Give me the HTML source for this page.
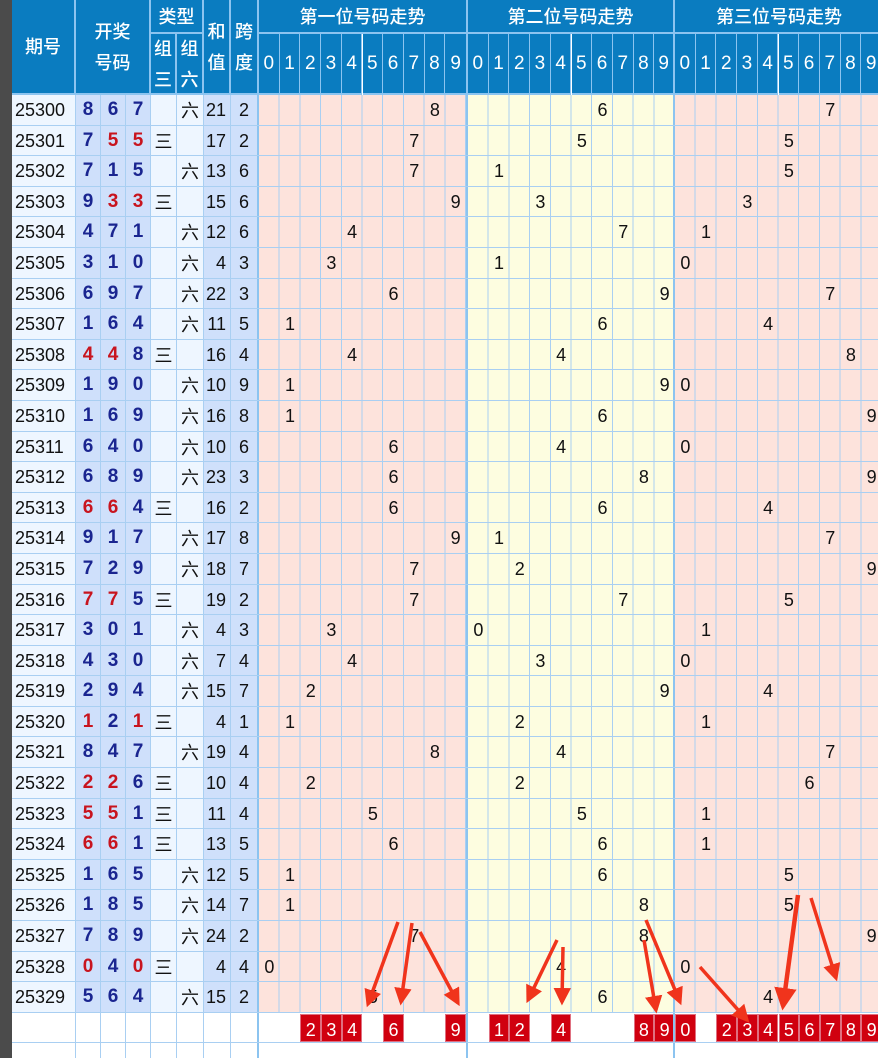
<!DOCTYPE html>
<html><head><meta charset="utf-8"><style>
*{margin:0;padding:0;box-sizing:border-box}
html,body{width:878px;height:1058px;overflow:hidden}
body{background:#fff;font-family:"Liberation Sans","Noto Sans CJK SC",sans-serif;position:relative}
#lm{position:absolute;left:0;top:0;width:12px;height:1058px;background:#4b4b4b}
.hd{position:absolute;background:#0a7cc0;color:#fff;border-right:2px solid #8cc4f0;border-bottom:2px solid #8cc4f0;display:flex;align-items:center;justify-content:center;text-align:center;font-family:"Noto Sans CJK SC",sans-serif;font-size:18px;line-height:31px;font-weight:500}
.dg{font-family:"Liberation Sans",sans-serif;font-size:19px;border-right:1px solid #8cc4f0;font-weight:normal}
.dg.e{border-right:2px solid #8cc4f0}
#rows{position:absolute;left:12px;top:95px;width:866px}
.r{position:relative;height:30.6px;display:flex;border-bottom:1px solid #a9cff2;font-size:18px;line-height:30px}
.r s{text-decoration:none;display:block;height:100%;border-right:1px solid #a9cff2;flex:none}
.r s.q{width:64px;background:#eef6ff;padding-left:3px;color:#111}
.r s.n{width:25px;background:#cfe0fb;text-align:center;font-weight:bold;color:#1a2590;font-size:19px}
.r s.n.x{color:#c8141e}
.r s.g{width:26px;background:#eef6ff;text-align:center;font-family:"Noto Sans CJK SC",sans-serif;color:#111}
.r s.g2{width:27px}
.r s.h{width:27px;background:#cfe0fb;text-align:right;padding-right:4px;color:#111}
.r s.k{width:28px;background:#cfe0fb;text-align:center;color:#111;border-right:2px solid #8cc4f0}
.z{position:absolute;top:0;height:100%;width:207px;background-image:repeating-linear-gradient(to right,transparent 0 19.7px,#a9cff2 19.7px 20.7px)}
.z1{left:247px;background-color:#fde3dc}
.z2{left:454px;background-color:#fdfde0;border-left:2px solid #8cc4f0}
.z3{left:661px;background-color:#fde3dc;border-left:2px solid #8cc4f0}
.z i{font-style:normal;position:absolute;top:0;width:20.7px;text-align:center;color:#111}
.p0{left:0}.p1{left:20.7px}.p2{left:41.4px}.p3{left:62.1px}.p4{left:82.8px}.p5{left:103.5px}.p6{left:124.2px}.p7{left:144.9px}.p8{left:165.6px}.p9{left:186.3px}
.w s,.w .z{background:#fff!important}
.w .z i{background:#d0000f;color:#fff;height:28px;top:1px;border:1px solid #e07080}
svg{position:absolute;left:0;top:0}
</style></head><body>
<div id="lm"></div>
<div class="hd" style="left:12px;top:0;width:64px;height:95px">期号</div>
<div class="hd" style="left:76px;top:0;width:75px;height:95px">开奖<br>号码</div>
<div class="hd" style="left:151px;top:0;width:53px;height:34px">类型</div>
<div class="hd" style="left:151px;top:34px;width:26px;height:61px">组<br>三</div>
<div class="hd" style="left:177px;top:34px;width:27px;height:61px">组<br>六</div>
<div class="hd" style="left:204px;top:0;width:27px;height:95px">和<br>值</div>
<div class="hd" style="left:231px;top:0;width:28px;height:95px">跨<br>度</div>
<div class="hd" style="left:259px;top:0;width:209px;height:34px">第一位号码走势</div>
<div class="hd" style="left:468px;top:0;width:207px;height:34px">第二位号码走势</div>
<div class="hd" style="left:675px;top:0;width:210px;height:34px">第三位号码走势</div>
<div class="hd dg" style="left:259px;top:34px;width:20.7px;height:61px">0</div><div class="hd dg" style="left:279.7px;top:34px;width:20.7px;height:61px">1</div><div class="hd dg" style="left:300.4px;top:34px;width:20.7px;height:61px">2</div><div class="hd dg" style="left:321.1px;top:34px;width:20.7px;height:61px">3</div><div class="hd dg" style="left:341.8px;top:34px;width:20.7px;height:61px">4</div><div class="hd dg" style="left:362.5px;top:34px;width:20.7px;height:61px">5</div><div class="hd dg" style="left:383.2px;top:34px;width:20.7px;height:61px">6</div><div class="hd dg" style="left:403.9px;top:34px;width:20.7px;height:61px">7</div><div class="hd dg" style="left:424.6px;top:34px;width:20.7px;height:61px">8</div><div class="hd dg e" style="left:445.3px;top:34px;width:22.7px;height:61px">9</div>
<div class="hd dg" style="left:468px;top:34px;width:20.7px;height:61px">0</div><div class="hd dg" style="left:488.7px;top:34px;width:20.7px;height:61px">1</div><div class="hd dg" style="left:509.4px;top:34px;width:20.7px;height:61px">2</div><div class="hd dg" style="left:530.1px;top:34px;width:20.7px;height:61px">3</div><div class="hd dg" style="left:550.8px;top:34px;width:20.7px;height:61px">4</div><div class="hd dg" style="left:571.5px;top:34px;width:20.7px;height:61px">5</div><div class="hd dg" style="left:592.2px;top:34px;width:20.7px;height:61px">6</div><div class="hd dg" style="left:612.9px;top:34px;width:20.7px;height:61px">7</div><div class="hd dg" style="left:633.6px;top:34px;width:20.7px;height:61px">8</div><div class="hd dg e" style="left:654.3px;top:34px;width:20.7px;height:61px">9</div>
<div class="hd dg" style="left:675px;top:34px;width:20.7px;height:61px">0</div><div class="hd dg" style="left:695.7px;top:34px;width:20.7px;height:61px">1</div><div class="hd dg" style="left:716.4px;top:34px;width:20.7px;height:61px">2</div><div class="hd dg" style="left:737.1px;top:34px;width:20.7px;height:61px">3</div><div class="hd dg" style="left:757.8px;top:34px;width:20.7px;height:61px">4</div><div class="hd dg" style="left:778.5px;top:34px;width:20.7px;height:61px">5</div><div class="hd dg" style="left:799.2px;top:34px;width:20.7px;height:61px">6</div><div class="hd dg" style="left:819.9px;top:34px;width:20.7px;height:61px">7</div><div class="hd dg" style="left:840.6px;top:34px;width:20.7px;height:61px">8</div><div class="hd dg" style="left:861.3px;top:34px;width:20.7px;height:61px">9</div>

<div id="rows">
<div class="r"><s class="q">25300</s><s class="n">8</s><s class="n">6</s><s class="n">7</s><s class="g"></s><s class="g g2">六</s><s class="h">21</s><s class="k">2</s><div class="z z1"><i class="p8">8</i></div><div class="z z2"><i class="p6">6</i></div><div class="z z3"><i class="p7">7</i></div></div>
<div class="r"><s class="q">25301</s><s class="n">7</s><s class="n x">5</s><s class="n x">5</s><s class="g">三</s><s class="g g2"></s><s class="h">17</s><s class="k">2</s><div class="z z1"><i class="p7">7</i></div><div class="z z2"><i class="p5">5</i></div><div class="z z3"><i class="p5">5</i></div></div>
<div class="r"><s class="q">25302</s><s class="n">7</s><s class="n">1</s><s class="n">5</s><s class="g"></s><s class="g g2">六</s><s class="h">13</s><s class="k">6</s><div class="z z1"><i class="p7">7</i></div><div class="z z2"><i class="p1">1</i></div><div class="z z3"><i class="p5">5</i></div></div>
<div class="r"><s class="q">25303</s><s class="n">9</s><s class="n x">3</s><s class="n x">3</s><s class="g">三</s><s class="g g2"></s><s class="h">15</s><s class="k">6</s><div class="z z1"><i class="p9">9</i></div><div class="z z2"><i class="p3">3</i></div><div class="z z3"><i class="p3">3</i></div></div>
<div class="r"><s class="q">25304</s><s class="n">4</s><s class="n">7</s><s class="n">1</s><s class="g"></s><s class="g g2">六</s><s class="h">12</s><s class="k">6</s><div class="z z1"><i class="p4">4</i></div><div class="z z2"><i class="p7">7</i></div><div class="z z3"><i class="p1">1</i></div></div>
<div class="r"><s class="q">25305</s><s class="n">3</s><s class="n">1</s><s class="n">0</s><s class="g"></s><s class="g g2">六</s><s class="h">4</s><s class="k">3</s><div class="z z1"><i class="p3">3</i></div><div class="z z2"><i class="p1">1</i></div><div class="z z3"><i class="p0">0</i></div></div>
<div class="r"><s class="q">25306</s><s class="n">6</s><s class="n">9</s><s class="n">7</s><s class="g"></s><s class="g g2">六</s><s class="h">22</s><s class="k">3</s><div class="z z1"><i class="p6">6</i></div><div class="z z2"><i class="p9">9</i></div><div class="z z3"><i class="p7">7</i></div></div>
<div class="r"><s class="q">25307</s><s class="n">1</s><s class="n">6</s><s class="n">4</s><s class="g"></s><s class="g g2">六</s><s class="h">11</s><s class="k">5</s><div class="z z1"><i class="p1">1</i></div><div class="z z2"><i class="p6">6</i></div><div class="z z3"><i class="p4">4</i></div></div>
<div class="r"><s class="q">25308</s><s class="n x">4</s><s class="n x">4</s><s class="n">8</s><s class="g">三</s><s class="g g2"></s><s class="h">16</s><s class="k">4</s><div class="z z1"><i class="p4">4</i></div><div class="z z2"><i class="p4">4</i></div><div class="z z3"><i class="p8">8</i></div></div>
<div class="r"><s class="q">25309</s><s class="n">1</s><s class="n">9</s><s class="n">0</s><s class="g"></s><s class="g g2">六</s><s class="h">10</s><s class="k">9</s><div class="z z1"><i class="p1">1</i></div><div class="z z2"><i class="p9">9</i></div><div class="z z3"><i class="p0">0</i></div></div>
<div class="r"><s class="q">25310</s><s class="n">1</s><s class="n">6</s><s class="n">9</s><s class="g"></s><s class="g g2">六</s><s class="h">16</s><s class="k">8</s><div class="z z1"><i class="p1">1</i></div><div class="z z2"><i class="p6">6</i></div><div class="z z3"><i class="p9">9</i></div></div>
<div class="r"><s class="q">25311</s><s class="n">6</s><s class="n">4</s><s class="n">0</s><s class="g"></s><s class="g g2">六</s><s class="h">10</s><s class="k">6</s><div class="z z1"><i class="p6">6</i></div><div class="z z2"><i class="p4">4</i></div><div class="z z3"><i class="p0">0</i></div></div>
<div class="r"><s class="q">25312</s><s class="n">6</s><s class="n">8</s><s class="n">9</s><s class="g"></s><s class="g g2">六</s><s class="h">23</s><s class="k">3</s><div class="z z1"><i class="p6">6</i></div><div class="z z2"><i class="p8">8</i></div><div class="z z3"><i class="p9">9</i></div></div>
<div class="r"><s class="q">25313</s><s class="n x">6</s><s class="n x">6</s><s class="n">4</s><s class="g">三</s><s class="g g2"></s><s class="h">16</s><s class="k">2</s><div class="z z1"><i class="p6">6</i></div><div class="z z2"><i class="p6">6</i></div><div class="z z3"><i class="p4">4</i></div></div>
<div class="r"><s class="q">25314</s><s class="n">9</s><s class="n">1</s><s class="n">7</s><s class="g"></s><s class="g g2">六</s><s class="h">17</s><s class="k">8</s><div class="z z1"><i class="p9">9</i></div><div class="z z2"><i class="p1">1</i></div><div class="z z3"><i class="p7">7</i></div></div>
<div class="r"><s class="q">25315</s><s class="n">7</s><s class="n">2</s><s class="n">9</s><s class="g"></s><s class="g g2">六</s><s class="h">18</s><s class="k">7</s><div class="z z1"><i class="p7">7</i></div><div class="z z2"><i class="p2">2</i></div><div class="z z3"><i class="p9">9</i></div></div>
<div class="r"><s class="q">25316</s><s class="n x">7</s><s class="n x">7</s><s class="n">5</s><s class="g">三</s><s class="g g2"></s><s class="h">19</s><s class="k">2</s><div class="z z1"><i class="p7">7</i></div><div class="z z2"><i class="p7">7</i></div><div class="z z3"><i class="p5">5</i></div></div>
<div class="r"><s class="q">25317</s><s class="n">3</s><s class="n">0</s><s class="n">1</s><s class="g"></s><s class="g g2">六</s><s class="h">4</s><s class="k">3</s><div class="z z1"><i class="p3">3</i></div><div class="z z2"><i class="p0">0</i></div><div class="z z3"><i class="p1">1</i></div></div>
<div class="r"><s class="q">25318</s><s class="n">4</s><s class="n">3</s><s class="n">0</s><s class="g"></s><s class="g g2">六</s><s class="h">7</s><s class="k">4</s><div class="z z1"><i class="p4">4</i></div><div class="z z2"><i class="p3">3</i></div><div class="z z3"><i class="p0">0</i></div></div>
<div class="r"><s class="q">25319</s><s class="n">2</s><s class="n">9</s><s class="n">4</s><s class="g"></s><s class="g g2">六</s><s class="h">15</s><s class="k">7</s><div class="z z1"><i class="p2">2</i></div><div class="z z2"><i class="p9">9</i></div><div class="z z3"><i class="p4">4</i></div></div>
<div class="r"><s class="q">25320</s><s class="n x">1</s><s class="n">2</s><s class="n x">1</s><s class="g">三</s><s class="g g2"></s><s class="h">4</s><s class="k">1</s><div class="z z1"><i class="p1">1</i></div><div class="z z2"><i class="p2">2</i></div><div class="z z3"><i class="p1">1</i></div></div>
<div class="r"><s class="q">25321</s><s class="n">8</s><s class="n">4</s><s class="n">7</s><s class="g"></s><s class="g g2">六</s><s class="h">19</s><s class="k">4</s><div class="z z1"><i class="p8">8</i></div><div class="z z2"><i class="p4">4</i></div><div class="z z3"><i class="p7">7</i></div></div>
<div class="r"><s class="q">25322</s><s class="n x">2</s><s class="n x">2</s><s class="n">6</s><s class="g">三</s><s class="g g2"></s><s class="h">10</s><s class="k">4</s><div class="z z1"><i class="p2">2</i></div><div class="z z2"><i class="p2">2</i></div><div class="z z3"><i class="p6">6</i></div></div>
<div class="r"><s class="q">25323</s><s class="n x">5</s><s class="n x">5</s><s class="n">1</s><s class="g">三</s><s class="g g2"></s><s class="h">11</s><s class="k">4</s><div class="z z1"><i class="p5">5</i></div><div class="z z2"><i class="p5">5</i></div><div class="z z3"><i class="p1">1</i></div></div>
<div class="r"><s class="q">25324</s><s class="n x">6</s><s class="n x">6</s><s class="n">1</s><s class="g">三</s><s class="g g2"></s><s class="h">13</s><s class="k">5</s><div class="z z1"><i class="p6">6</i></div><div class="z z2"><i class="p6">6</i></div><div class="z z3"><i class="p1">1</i></div></div>
<div class="r"><s class="q">25325</s><s class="n">1</s><s class="n">6</s><s class="n">5</s><s class="g"></s><s class="g g2">六</s><s class="h">12</s><s class="k">5</s><div class="z z1"><i class="p1">1</i></div><div class="z z2"><i class="p6">6</i></div><div class="z z3"><i class="p5">5</i></div></div>
<div class="r"><s class="q">25326</s><s class="n">1</s><s class="n">8</s><s class="n">5</s><s class="g"></s><s class="g g2">六</s><s class="h">14</s><s class="k">7</s><div class="z z1"><i class="p1">1</i></div><div class="z z2"><i class="p8">8</i></div><div class="z z3"><i class="p5">5</i></div></div>
<div class="r"><s class="q">25327</s><s class="n">7</s><s class="n">8</s><s class="n">9</s><s class="g"></s><s class="g g2">六</s><s class="h">24</s><s class="k">2</s><div class="z z1"><i class="p7">7</i></div><div class="z z2"><i class="p8">8</i></div><div class="z z3"><i class="p9">9</i></div></div>
<div class="r"><s class="q">25328</s><s class="n x">0</s><s class="n">4</s><s class="n x">0</s><s class="g">三</s><s class="g g2"></s><s class="h">4</s><s class="k">4</s><div class="z z1"><i class="p0">0</i></div><div class="z z2"><i class="p4">4</i></div><div class="z z3"><i class="p0">0</i></div></div>
<div class="r"><s class="q">25329</s><s class="n">5</s><s class="n">6</s><s class="n">4</s><s class="g"></s><s class="g g2">六</s><s class="h">15</s><s class="k">2</s><div class="z z1"><i class="p5">5</i></div><div class="z z2"><i class="p6">6</i></div><div class="z z3"><i class="p4">4</i></div></div>
<div class="r w"><s class="q"></s><s class="n"></s><s class="n"></s><s class="n"></s><s class="g"></s><s class="g g2"></s><s class="h"></s><s class="k"></s><div class="z z1"><i class="p2">2</i><i class="p3">3</i><i class="p4">4</i><i class="p6">6</i><i class="p9">9</i></div><div class="z z2"><i class="p1">1</i><i class="p2">2</i><i class="p4">4</i><i class="p8">8</i><i class="p9">9</i></div><div class="z z3"><i class="p0">0</i><i class="p2">2</i><i class="p3">3</i><i class="p4">4</i><i class="p5">5</i><i class="p6">6</i><i class="p7">7</i><i class="p8">8</i><i class="p9">9</i></div></div>
<div class="r w"><s class="q"></s><s class="n"></s><s class="n"></s><s class="n"></s><s class="g"></s><s class="g g2"></s><s class="h"></s><s class="k"></s><div class="z z1"></div><div class="z z2"></div><div class="z z3"></div></div>
</div>
<svg width="878" height="1058" viewBox="0 0 878 1058">
<defs><marker id="a" markerWidth="5" markerHeight="5" refX="4" refY="2.5" orient="auto" markerUnits="strokeWidth"><path d="M0,0 L5,2.5 L0,5 Z" fill="#f0341c"/></marker></defs>
<g stroke="#f0341c" stroke-width="3.5" fill="none" marker-end="url(#a)">
<line x1="398" y1="922" x2="368" y2="1004"/>
<line x1="412" y1="923" x2="401" y2="1002"/>
<line x1="420" y1="932" x2="458" y2="1003"/>
<line x1="557" y1="940" x2="528" y2="1000"/>
<line x1="563" y1="947" x2="562" y2="1002"/>
<line x1="646" y1="920" x2="680" y2="1002"/>
<line x1="644" y1="940" x2="656" y2="1010"/>
<line x1="700" y1="967" x2="747" y2="1020"/>
<line x1="798" y1="895" x2="783" y2="1006" stroke-width="4.5"/>
<line x1="811" y1="898" x2="836" y2="978"/>
</g>
</svg>
</body></html>
